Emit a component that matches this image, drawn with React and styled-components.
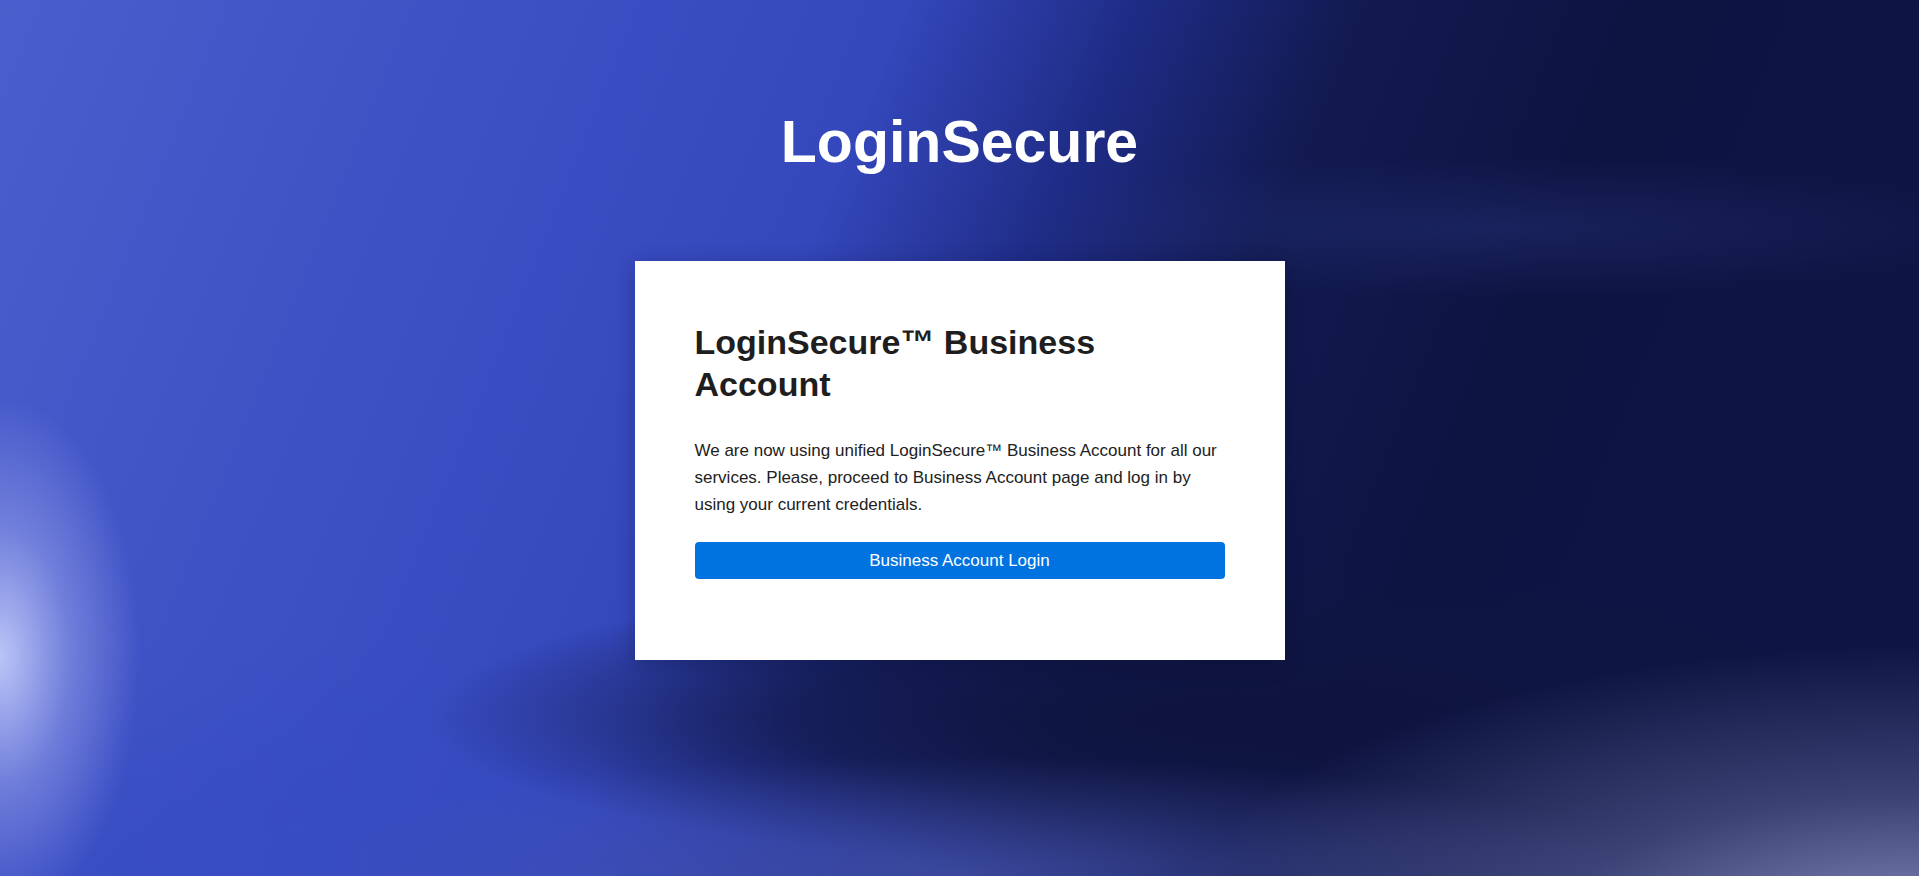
import styled, { createGlobalStyle } from "styled-components";

const GlobalStyle = createGlobalStyle`
  html, body {
    margin: 0;
    padding: 0;
    height: 100%;
  }
  body {
    font-family: "Liberation Sans", Arial, sans-serif;
  }
  #root {
    min-height: 100%;
  }
`;

function App() {
  return (
    <>
      <GlobalStyle />
      <Page>
        <Logo>LoginSecure</Logo>
        <Card>
          <Title>LoginSecure™ Business Account</Title>
          <Text>
            We are now using unified LoginSecure™ Business Account for all our
            services. Please, proceed to Business Account page and log in by
            using your current credentials.
          </Text>
          <LoginButton type="button">Business Account Login</LoginButton>
        </Card>
      </Page>
    </>
  );
}

const Page = styled.div`
  min-height: 876px;
  box-sizing: border-box;
  display: flex;
  flex-direction: column;
  align-items: center;
  padding-top: 113px;
  background:
    radial-gradient(ellipse 140px 260px at 0% 75%, rgba(200, 208, 252, 0.9) 0%, rgba(150, 160, 235, 0.55) 50%, rgba(150, 160, 235, 0) 100%),
    radial-gradient(ellipse 760px 300px at 100% 108%, rgba(145, 152, 200, 0.95) 0%, rgba(95, 102, 155, 0.55) 50%, rgba(60, 66, 120, 0) 100%),
    radial-gradient(ellipse 700px 120px at 50% 100%, rgba(70, 84, 170, 0.7) 0%, rgba(70, 84, 170, 0) 100%),
    radial-gradient(ellipse 800px 150px at 64% 82%, rgba(14, 20, 62, 0.95) 0%, rgba(16, 22, 66, 0.7) 55%, rgba(16, 22, 66, 0) 100%),
    radial-gradient(ellipse 900px 240px at 18% 100%, rgba(55, 75, 195, 0.85) 0%, rgba(55, 75, 195, 0) 100%),
    radial-gradient(ellipse 520px 70px at 78% 26%, rgba(40, 54, 130, 0.4) 0%, rgba(40, 54, 130, 0) 100%),
    linear-gradient(112deg, #4a5ecc 0%, #3a4dc2 28%, #3447bb 40%, #1f2c86 50%, #121a50 60%, #0e1442 72%, #0f1545 100%);
`;

const Logo = styled.h1`
  margin: 0;
  font-family: "Liberation Sans", Arial, sans-serif;
  font-size: 59px;
  line-height: 59px;
  font-weight: 700;
  color: #ffffff;
`;

const Card = styled.div`
  margin-top: 89px;
  width: 650px;
  box-sizing: border-box;
  padding: 60px 60px 81px;
  background: #ffffff;
  box-shadow: 0 4px 18px rgba(5, 10, 40, 0.25);
`;

const Title = styled.h2`
  margin: 0;
  font-family: "Liberation Sans", Arial, sans-serif;
  font-size: 34px;
  line-height: 42px;
  font-weight: 700;
  color: #1e1e1e;
`;

const Text = styled.p`
  margin: 32px 0 24px;
  font-family: "Liberation Sans", Arial, sans-serif;
  font-size: 17px;
  line-height: 27px;
  color: #222222;
`;

const LoginButton = styled.button`
  display: block;
  width: 100%;
  height: 37px;
  border: none;
  border-radius: 4px;
  background: #0073e0;
  color: #ffffff;
  font-family: "Liberation Sans", Arial, sans-serif;
  font-size: 17px;
  cursor: pointer;
`;

export default App;
